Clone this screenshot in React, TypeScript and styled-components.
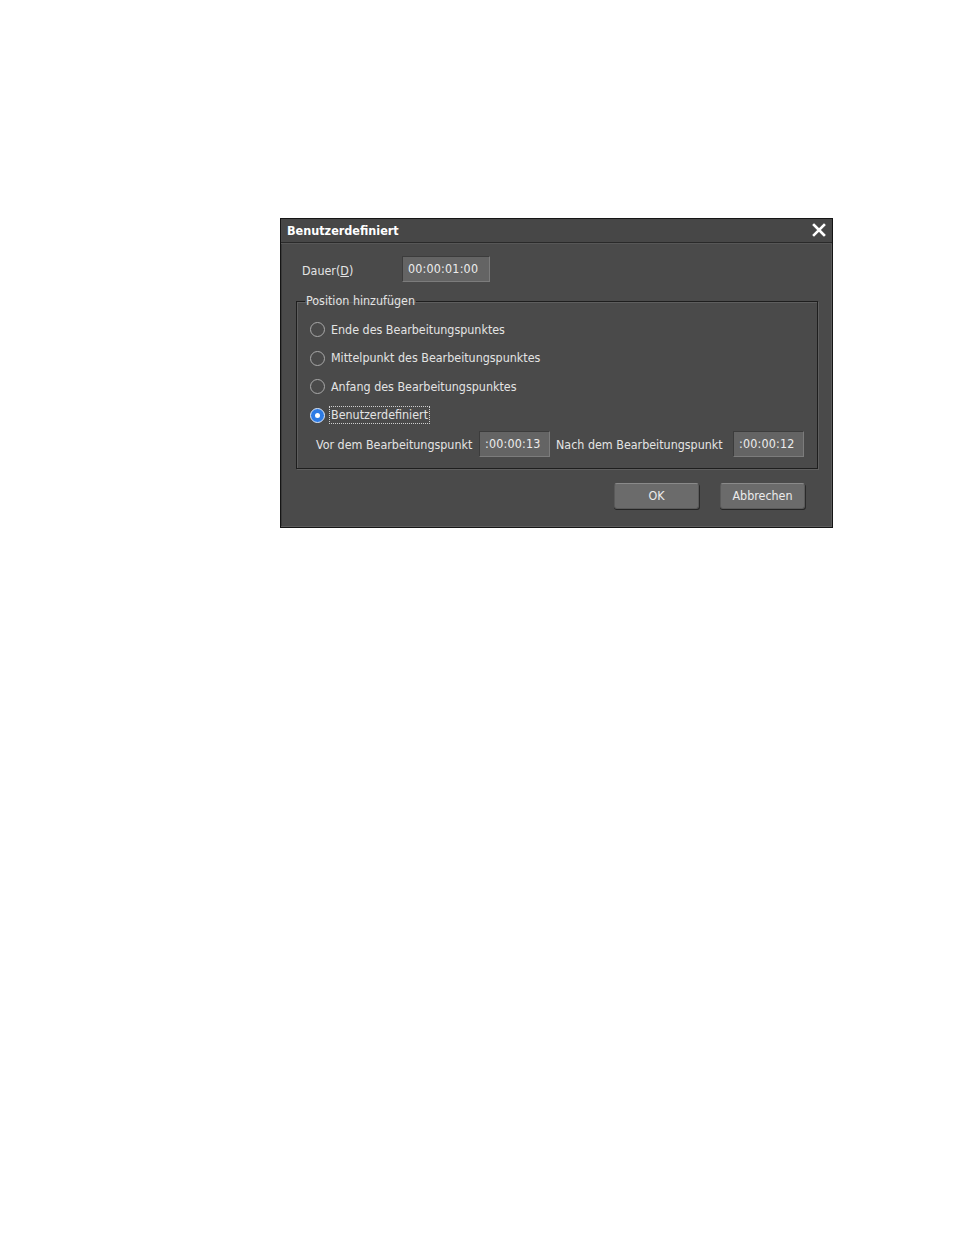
import React from "react";
import styled, { createGlobalStyle } from "styled-components";

const GlobalStyle = createGlobalStyle`
  html, body { margin: 0; padding: 0; background: #ffffff; }
  body { font-family: "DejaVu Sans Condensed", "DejaVu Sans", "Liberation Sans", sans-serif; }
`;

const Page = styled.div`
  width: 954px;
  height: 1235px;
  padding: 218px 0 0 280px;
  box-sizing: border-box;
`;

const Dialog = styled.div`
  width: 553px;
  height: 310px;
  box-sizing: border-box;
  background: #4a4a4a;
  border: 1px solid #151515;
  box-shadow: inset -1px -1px 0 #5c5c5c, inset 1px 0 0 #3a3a3a;
  display: flex;
  flex-direction: column;
  font-stretch: condensed;
  font-size: 12.4px;
  color: #e4e4e4;
`;

const TitleBar = styled.div`
  height: 24px;
  flex: none;
  display: flex;
  align-items: center;
  justify-content: space-between;
  padding: 0 6px 1px 6px;
  box-sizing: border-box;
  background: #474747;
  border-bottom: 1px solid #2a2a2a;
  box-shadow: 0 1px 0 #575757;
`;

const Title = styled.span`
  font-weight: bold;
  font-size: 12.5px;
  color: #ffffff;
`;

const CloseIcon = styled.svg`
  width: 14px;
  height: 14px;
  display: block;
`;

const Body = styled.div`
  flex: 1;
  display: flex;
  flex-direction: column;
  padding: 13px 0 0 0;
`;

const DurationRow = styled.div`
  display: flex;
  align-items: center;
  padding-left: 21px;
`;

const Label = styled.span<{ $width?: number }>`
  display: inline-block;
  width: ${(p) => (p.$width ? `${p.$width}px` : "auto")};
  flex: none;
  white-space: nowrap;
  padding-top: 2px;
`;

const TimeField = styled.div<{ $width: number }>`
  width: ${(p) => p.$width}px;
  height: 26px;
  box-sizing: border-box;
  flex: none;
  background: #646464;
  border-top: 1px solid #3c3c3c;
  border-left: 1px solid #3c3c3c;
  border-right: 1px solid #7c7c7c;
  border-bottom: 1px solid #7c7c7c;
  color: #ececec;
  display: flex;
  align-items: flex-start;
  padding: 4px 0 0 5px;
  letter-spacing: 0.2px;
`;

const Group = styled.fieldset`
  margin: 12px 0 0 15px;
  width: 522px;
  height: 175px;
  box-sizing: border-box;
  border: 1px solid #1e1e1e;
  box-shadow: 1px 1px 0 #5e5e5e, inset 1px 1px 0 #5e5e5e;
  padding: 14px 0 0 13px;
  display: flex;
  flex-direction: column;
`;

const Legend = styled.legend`
  padding: 0 1px;
  margin-left: -5px;
  line-height: 14px;
  color: #e4e4e4;
`;

const RadioList = styled.div`
  display: flex;
  flex-direction: column;
  gap: 13.5px;
`;

const RadioRow = styled.div`
  display: flex;
  align-items: center;
  height: 15px;
`;

const RadioCircle = styled.span<{ $checked?: boolean }>`
  width: 15px;
  height: 15px;
  box-sizing: border-box;
  border-radius: 50%;
  flex: none;
  margin-right: 6px;
  border: 1.5px solid ${(p) => (p.$checked ? "#dfe9f8" : "#a9a9a9")};
  background: ${(p) => (p.$checked ? "#2d7be5" : "transparent")};
  display: flex;
  align-items: center;
  justify-content: center;
  &::after {
    content: "";
    display: ${(p) => (p.$checked ? "block" : "none")};
    width: 5px;
    height: 5px;
    border-radius: 50%;
    background: #ffffff;
  }
`;

const RadioLabel = styled.span<{ $focused?: boolean }>`
  white-space: nowrap;
  line-height: 14px;
  padding: 1px 1px;
  margin-left: -1px;
  outline: ${(p) => (p.$focused ? "1px dotted #cfcfcf" : "none")};
`;

const OffsetRow = styled.div`
  display: flex;
  align-items: center;
  margin-top: 8px;
  padding-left: 6px;
`;

const Spacer = styled.span<{ $w: number }>`
  width: ${(p) => p.$w}px;
  flex: none;
`;

const ButtonRow = styled.div`
  display: flex;
  justify-content: flex-end;
  gap: 21px;
  padding: 14px 27px 0 0;
`;

const Button = styled.button`
  width: 85px;
  height: 26px;
  box-sizing: border-box;
  border-radius: 3px;
  background: #6b6b6b;
  border: 1px solid #5a5a5a;
  border-top-color: #8a8a8a;
  box-shadow: 0 1px 0 #242424, 1px 1px 0 #2a2a2a;
  color: #ececec;
  font-family: inherit;
  font-stretch: condensed;
  font-size: 12.4px;
  padding: 0 0 1px 0;
`;

const radios = [
  { label: "Ende des Bearbeitungspunktes" },
  { label: "Mittelpunkt des Bearbeitungspunktes" },
  { label: "Anfang des Bearbeitungspunktes" },
  { label: "Benutzerdefiniert", checked: true },
];

export default function App() {
  return (
    <>
      <GlobalStyle />
      <Page>
        <Dialog>
          <TitleBar>
            <Title>Benutzerdefiniert</Title>
            <CloseIcon viewBox="0 0 14 14">
              <path d="M2 2 L12 12 M12 2 L2 12" stroke="#ffffff" strokeWidth="2.6" strokeLinecap="square" />
            </CloseIcon>
          </TitleBar>
          <Body>
            <DurationRow>
              <Label $width={100}>
                Dauer(<u>D</u>)
              </Label>
              <TimeField $width={88}>00:00:01:00</TimeField>
            </DurationRow>
            <Group>
              <Legend>Position hinzufügen</Legend>
              <RadioList>
                {radios.map((r) => (
                  <RadioRow key={r.label}>
                    <RadioCircle $checked={r.checked} />
                    <RadioLabel $focused={r.checked}>{r.label}</RadioLabel>
                  </RadioRow>
                ))}
              </RadioList>
              <OffsetRow>
                <Label $width={163}>Vor dem Bearbeitungspunkt</Label>
                <TimeField $width={71}>:00:00:13</TimeField>
                <Spacer $w={6} />
                <Label $width={177}>Nach dem Bearbeitungspunkt</Label>
                <TimeField $width={71}>:00:00:12</TimeField>
              </OffsetRow>
            </Group>
            <ButtonRow>
              <Button>OK</Button>
              <Button>Abbrechen</Button>
            </ButtonRow>
          </Body>
        </Dialog>
      </Page>
    </>
  );
}
